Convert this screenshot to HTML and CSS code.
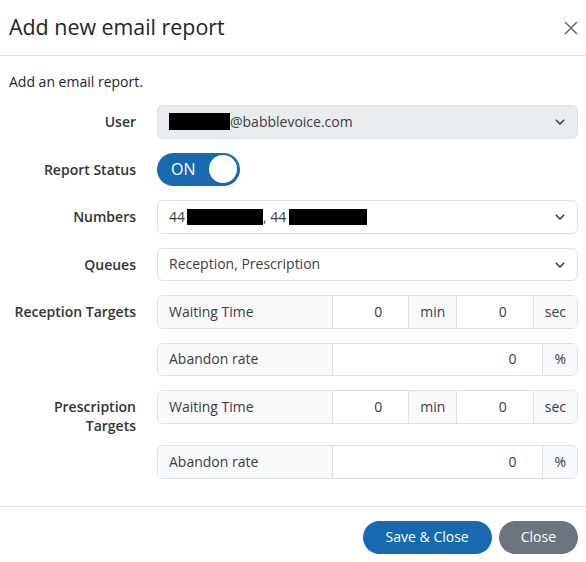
FILE: index.html
```html
<!DOCTYPE html>
<html lang="en">
<head>
<meta charset="utf-8">
<title>Add new email report</title>
<link rel="stylesheet" href="styles.css">
</head>
<body>
<div class="modal">
  <div class="modal-header">
    <h1 class="modal-title">Add new email report</h1>
    <button class="close-btn" type="button" aria-label="Close">
      <svg width="14" height="14" viewBox="0 0 14 14"><path d="M1 1L13 13M13 1L1 13" stroke="#707070" stroke-width="1.6" fill="none"/></svg>
    </button>
  </div>
  <div class="modal-body">
    <p class="intro">Add an email report.</p>

    <div class="form-row">
      <label class="col-label">User</label>
      <div class="field">
        <div class="select is-disabled">
          <span class="value"><span class="redact redact-user"></span>@babblevoice.com</span>
          <svg class="chevron" width="10" height="6" viewBox="0 0 10 6"><path d="M0.8 0.8L5 5L9.2 0.8" stroke="#3a3a3a" stroke-width="1.5" fill="none"/></svg>
        </div>
      </div>
    </div>

    <div class="form-row">
      <label class="col-label">Report Status</label>
      <div class="field">
        <div class="toggle"><span class="toggle-text">ON</span><span class="knob"></span></div>
      </div>
    </div>

    <div class="form-row">
      <label class="col-label">Numbers</label>
      <div class="field">
        <div class="select">
          <span class="value">44<span class="redact redact-n1"></span><span class="sep">,&nbsp;44</span><span class="redact redact-n2"></span></span>
          <svg class="chevron" width="10" height="6" viewBox="0 0 10 6"><path d="M0.8 0.8L5 5L9.2 0.8" stroke="#3a3a3a" stroke-width="1.5" fill="none"/></svg>
        </div>
      </div>
    </div>

    <div class="form-row">
      <label class="col-label">Queues</label>
      <div class="field">
        <div class="select">
          <span class="value">Reception, Prescription</span>
          <svg class="chevron" width="10" height="6" viewBox="0 0 10 6"><path d="M0.8 0.8L5 5L9.2 0.8" stroke="#3a3a3a" stroke-width="1.5" fill="none"/></svg>
        </div>
      </div>
    </div>

    <div class="form-row">
      <label class="col-label">Reception Targets</label>
      <div class="field">
        <div class="input-group">
          <span class="addon addon-label">Waiting Time</span>
          <span class="num">0</span>
          <span class="addon">min</span>
          <span class="num">0</span>
          <span class="addon">sec</span>
        </div>
      </div>
    </div>

    <div class="form-row">
      <label class="col-label"></label>
      <div class="field">
        <div class="input-group">
          <span class="addon addon-label">Abandon rate</span>
          <span class="num">0</span>
          <span class="addon">%</span>
        </div>
      </div>
    </div>

    <div class="form-row">
      <label class="col-label col-label-tall">Prescription Targets</label>
      <div class="field">
        <div class="input-group">
          <span class="addon addon-label">Waiting Time</span>
          <span class="num">0</span>
          <span class="addon">min</span>
          <span class="num">0</span>
          <span class="addon">sec</span>
        </div>
      </div>
    </div>

    <div class="form-row">
      <label class="col-label"></label>
      <div class="field">
        <div class="input-group">
          <span class="addon addon-label">Abandon rate</span>
          <span class="num">0</span>
          <span class="addon">%</span>
        </div>
      </div>
    </div>
  </div>
  <div class="modal-footer">
    <button class="btn btn-primary" type="button">Save &amp; Close</button>
    <button class="btn btn-secondary" type="button">Close</button>
  </div>
</div>
</body>
</html>
```

FILE: styles.css
```css
html, body {
  margin: 0;
  padding: 0;
  background: #ffffff;
}

body {
  font-family: "Open Sans", "Noto Sans", sans-serif;
  font-size: 14px;
  line-height: 20px;
  color: #212529;
}

.modal {
  width: 586px;
}

.modal-header {
  height: 55px;
  border-bottom: 1px solid #dee2e6;
  display: flex;
  align-items: center;
  justify-content: space-between;
  padding: 0 7px 0 9px;
  box-sizing: content-box;
}

.modal-title {
  margin: 0;
  font-size: 21.4px;
  font-weight: 400;
  line-height: 26px;
  color: #212529;
  padding-bottom: 1px;
}

.close-btn {
  border: 0;
  background: transparent;
  padding: 0;
  width: 16px;
  height: 16px;
  display: flex;
  align-items: center;
  justify-content: center;
}

.modal-body {
  padding: 16px 8px 13px 9px;
}

.intro {
  margin: 0 0 13px 0;
  color: #212529;
}

.form-row {
  display: flex;
  align-items: flex-start;
  margin-bottom: 14px;
}

.col-label {
  width: 127px;
  flex: none;
  text-align: right;
  font-weight: 600;
  color: #333333;
  padding-top: 7px;
  line-height: 19px;
  margin-right: 21px;
}

.col-label-tall {
  margin-bottom: -4px;
}

.field {
  flex: 1;
  min-width: 0;
}

.select {
  height: 33.5px;
  box-sizing: border-box;
  border: 1px solid #dee2e6;
  border-radius: 6px;
  background: #ffffff;
  display: flex;
  align-items: center;
  justify-content: space-between;
  padding: 0 12px 0 11px;
  color: #3d3d3d;
}

.select.is-disabled {
  background: #e9ecef;
}

.value {
  display: flex;
  align-items: center;
  white-space: nowrap;
}

.redact {
  display: inline-block;
  background: #000000;
  height: 17px;
}

.redact-user {
  width: 61px;
}

.redact-n1 {
  width: 76px;
  height: 16px;
  margin-left: 2px;
}

.sep {
  margin-left: 0;
}

.redact-n2 {
  width: 78px;
  height: 16px;
  margin-left: 3px;
}

.chevron {
  flex: none;
  margin-top: 1px;
}

.toggle {
  width: 83px;
  height: 33.5px;
  box-sizing: border-box;
  border-radius: 17px;
  background: #1769b0;
  display: flex;
  align-items: center;
  justify-content: space-between;
  padding: 0 3px 0 14px;
}

.toggle-text {
  color: #ffffff;
  font-size: 16px;
  line-height: 20px;
}

.knob {
  width: 28px;
  height: 28px;
  border-radius: 50%;
  background: #ffffff;
}

.input-group {
  height: 33.5px;
  box-sizing: border-box;
  border: 1px solid #dee2e6;
  border-radius: 6px;
  display: flex;
  overflow: hidden;
  color: #3d3d3d;
}

.addon {
  flex: none;
  background: #f8f9fa;
  display: flex;
  align-items: center;
  padding: 0 11px;
  border-left: 1px solid #dee2e6;
}

.addon-label {
  width: 174px;
  box-sizing: border-box;
  border-left: 0;
  border-right: 0;
}

.num {
  flex: 1;
  display: flex;
  align-items: center;
  justify-content: flex-end;
  padding-right: 26px;
  background: #ffffff;
  border-left: 1px solid #dee2e6;
}

.modal-footer {
  border-top: 1px solid #dee2e6;
  display: flex;
  justify-content: flex-end;
  gap: 7px;
  padding: 14px 8px 8px 9px;
}

.btn {
  height: 33px;
  border: 0;
  border-radius: 17px;
  color: #ffffff;
  font-family: "Open Sans", "Noto Sans", sans-serif;
  font-size: 14px;
  padding: 0 22px;
  line-height: 20px;
}

.btn-primary {
  background: #1769b0;
  padding: 0 23px;
}

.btn-secondary {
  background: #6c757d;
}
```
